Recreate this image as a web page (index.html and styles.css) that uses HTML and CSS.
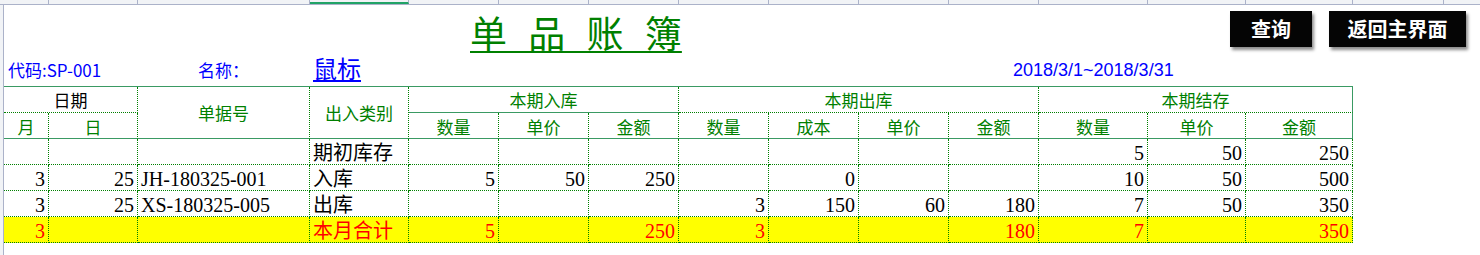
FILE: index.html
```html
<!DOCTYPE html>
<html lang="zh-CN">
<head>
<meta charset="utf-8">
<title>单品账簿</title>
<link rel="stylesheet" href="styles.css">
</head>
<body>
<div class="sheet">
  <div class="toprow">
    <div class="tc w-b"></div><div class="tc w-c"></div><div class="tc w-d"></div><div class="tc w-e sel"></div>
    <div class="tc w-n90"></div><div class="tc w-n90"></div><div class="tc w-n90"></div><div class="tc w-n90"></div>
    <div class="tc w-n90"></div><div class="tc w-n90"></div><div class="tc w-n90"></div>
    <div class="tc w-m"></div><div class="tc w-nn"></div><div class="tc w-o"></div><div class="tc w-p"></div><div class="tc w-q"></div>
  </div>

  <div class="title-row">
    <h1 class="title">单 品 账 簿</h1>
    <div class="buttons">
      <button class="btn btn-query">查询</button>
      <button class="btn btn-back">返回主界面</button>
    </div>
  </div>

  <div class="info-row">
    <span class="info code">代码:SP-001</span>
    <span class="info name-label">名称：</span>
    <span class="info name-value">鼠标</span>
    <span class="info period">2018/3/1~2018/3/31</span>
  </div>

  <div class="ledger">
    <div class="h h-date">日期</div>
    <div class="h h-doc">单据号</div>
    <div class="h h-type">出入类别</div>
    <div class="h h-in">本期入库</div>
    <div class="h h-out">本期出库</div>
    <div class="h h-bal last">本期结存</div>

    <div class="h h2">月</div>
    <div class="h h2">日</div>
    <div class="h h2">数量</div>
    <div class="h h2">单价</div>
    <div class="h h2">金额</div>
    <div class="h h2">数量</div>
    <div class="h h2">成本</div>
    <div class="h h2">单价</div>
    <div class="h h2">金额</div>
    <div class="h h2">数量</div>
    <div class="h h2">单价</div>
    <div class="h h2 last">金额</div>

    <div class="c"></div><div class="c"></div><div class="c"></div><div class="c t">期初库存</div>
    <div class="c"></div><div class="c"></div><div class="c"></div>
    <div class="c"></div><div class="c"></div><div class="c"></div><div class="c"></div>
    <div class="c n">5</div><div class="c n">50</div><div class="c n">250</div>

    <div class="c n">3</div><div class="c n">25</div><div class="c t">JH-180325-001</div><div class="c t">入库</div>
    <div class="c n">5</div><div class="c n">50</div><div class="c n">250</div>
    <div class="c"></div><div class="c n">0</div><div class="c"></div><div class="c"></div>
    <div class="c n">10</div><div class="c n">50</div><div class="c n">500</div>

    <div class="c n">3</div><div class="c n">25</div><div class="c t">XS-180325-005</div><div class="c t">出库</div>
    <div class="c"></div><div class="c"></div><div class="c"></div>
    <div class="c n">3</div><div class="c n">150</div><div class="c n">60</div><div class="c n">180</div>
    <div class="c n">7</div><div class="c n">50</div><div class="c n">350</div>

    <div class="c n sum">3</div><div class="c sum"></div><div class="c sum"></div><div class="c t sum">本月合计</div>
    <div class="c n sum">5</div><div class="c sum"></div><div class="c n sum">250</div>
    <div class="c n sum">3</div><div class="c sum"></div><div class="c sum"></div><div class="c n sum">180</div>
    <div class="c n sum">7</div><div class="c sum"></div><div class="c n sum">350</div>
  </div>
</div>
</body>
</html>
```
FILE: styles.css
```css
* { box-sizing: border-box; }

html, body {
  margin: 0;
  padding: 0;
  background: #ffffff;
}

body {
  width: 1480px;
  height: 255px;
  overflow: hidden;
  font-family: "Noto Sans CJK SC", "Liberation Sans", sans-serif;
}

.sheet {
  height: 255px;
  padding-left: 4px;
  background: linear-gradient(to right, #f1f3f6 0, #f1f3f6 3px, #abb2c9 3px, #abb2c9 4px, #ffffff 4px);
}

/* partial spreadsheet row at the very top */
.toprow {
  display: flex;
  height: 5px;
  margin-left: -4px;
  padding-left: 4px;
  background: #f1f3f6;
  border-bottom: 1px solid #abb2c9;
}
.tc {
  height: 4px;
  border-right: 1px solid #abb2c9;
  flex: none;
}
.w-b { width: 45px; }
.w-c { width: 89px; }
.w-d { width: 172px; }
.w-e { width: 99px; }
.w-n90 { width: 90px; }
.w-m { width: 109px; }
.w-nn { width: 98px; }
.w-o { width: 107px; }
.w-p { width: 91px; }
.w-q { flex: 1; border-right: none; }
.tc.sel {
  border-bottom: 2px solid #21a366;
}

/* title row */
.title-row {
  display: flex;
  align-items: flex-start;
  height: 46px;
}
.title {
  margin: 7px 0 0 466px;
  font-size: 37px;
  font-weight: normal;
  line-height: 40px;
  color: #008000;
  word-spacing: 13px;
  text-decoration: underline;
  text-decoration-thickness: 2px;
  text-underline-offset: 3px;
  white-space: nowrap;
}
.buttons {
  display: flex;
  gap: 17px;
  margin: 6px 14px 0 auto;
}
.btn {
  height: 36px;
  border: none;
  background: #050505;
  color: #ffffff;
  font-family: "Noto Sans CJK SC", sans-serif;
  font-size: 20px;
  font-weight: bold;
  line-height: 36px;
  padding: 0;
  box-shadow: 2px 3px 3px rgba(0, 0, 0, 0.45);
}
.btn-query { width: 82px; }
.btn-back { width: 137px; }

/* info row */
.info-row {
  display: flex;
  align-items: flex-end;
  height: 35px;
  padding-bottom: 4px;
  color: #0000ff;
  white-space: nowrap;
}
.info {
  font-size: 17px;
  line-height: 24px;
}
.code { margin-left: 4px; width: 190px; }
.name-label { width: 115px; }
.name-value {
  font-size: 24px;
  line-height: 28px;
  text-decoration: underline;
  text-underline-offset: 2px;
  width: 700px;
}
.period {
  font-family: "Liberation Sans", sans-serif;
  font-size: 18px;
}

/* ledger grid */
.ledger {
  display: grid;
  grid-template-columns: 45px 89px 172px 99px 90px 90px 90px 90px 90px 90px 90px 109px 98px 107px;
  grid-auto-rows: 26px;
  width: 1349px;
  border-top: 1px solid #3a9a63;
}

.h {
  display: flex;
  align-items: center;
  justify-content: center;
  color: #008000;
  font-size: 17px;
  line-height: 20px;
  border-right: 1px dotted #008000;
  border-bottom: 1px dotted #008000;
}
.h-date { grid-column: 1 / 3; color: #000000; }
.h-doc { grid-column: 3; grid-row: 1 / 3; border-bottom: 1px solid #3a9a63; }
.h-type { grid-column: 4; grid-row: 1 / 3; border-bottom: 1px solid #3a9a63; }
.h-in { grid-column: 5 / 8; border-bottom: 1px solid #3a9a63; }
.h-out { grid-column: 8 / 12; }
.h-bal { grid-column: 12 / 15; }
.h2 { border-bottom: 1px solid #3a9a63; padding-top: 2px; }
.h.last { border-right: 1px solid #3a9a63; }

.c {
  display: flex;
  align-items: center;
  padding: 2px 3px 0 3px;
  font-family: "Liberation Serif", "Noto Sans CJK SC", serif;
  font-size: 20px;
  line-height: 22px;
  color: #000000;
  white-space: nowrap;
  overflow: hidden;
  border-right: 1px dotted #008000;
  border-bottom: 1px dotted #008000;
}
.c.n { justify-content: flex-end; }
.c.t { justify-content: flex-start; }
.c.sum {
  background: #ffff00;
  color: #ff0000;
}
```
